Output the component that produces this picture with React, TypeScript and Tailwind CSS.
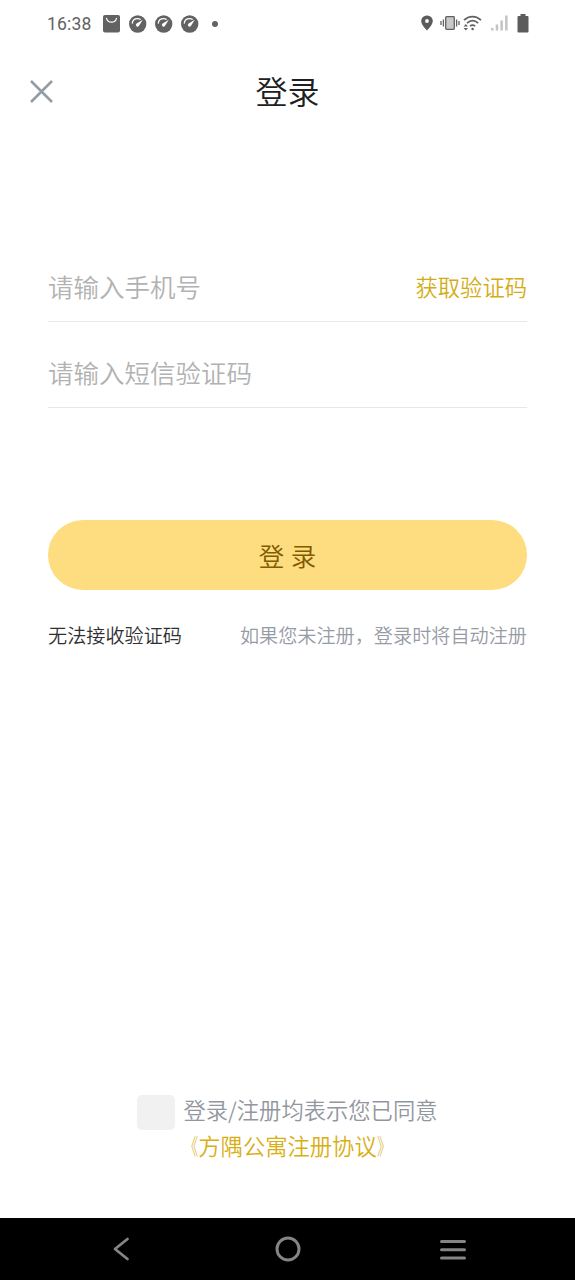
import React, { useState } from 'react';

const BagIcon = () => (
  <svg className="h-[18px] w-[18px]" viewBox="0 0 18 18" fill="none">
    <rect x="0" y="0" width="17" height="17.5" rx="2" fill="#626262" />
    <path d="M3.500 3.300c.6 2.400 2.400 3.900 5 3.900s4.400-1.500 5-3.900" stroke="#fff" strokeWidth="1.2" strokeLinecap="round" />
  </svg>
);

const GaugeIcon = () => (
  <svg className="h-[18px] w-[18px]" viewBox="0 0 18 18" fill="none">
    <circle cx="8.700" cy="9" r="8.700" fill="#626262" />
    <path d="M3.200 8.600C3.500 5.500 5.700 3.700 8.700 3.700c1.200 0 2.100.3 3 .8" stroke="#fff" strokeWidth="1.200" />
    <path d="M13.800 4.700L7.300 8.800a1.700 1.700 0 1 0 2.600 2.200z" fill="#fff" />
  </svg>
);

const PinIcon = () => (
  <svg className="h-4 w-3" viewBox="0 0 12 16">
    <path
      fill="#5c5c5c"
      fillRule="evenodd"
      d="M6 .5A5.500 5.500 0 0 0 .2 6c0 4 5.800 9.500 5.800 9.500S11.800 10 11.800 6A5.500 5.500 0 0 0 6 .5zm0 3.600a1.900 1.900 0 1 1 0 3.800 1.900 1.900 0 0 1 0-3.800z"
    />
  </svg>
);

const VibrateIcon = () => (
  <svg className="h-4 w-5" viewBox="0 0 20 16" fill="none" stroke="#606060" strokeWidth="1.300">
    <rect x="5.700" y="1.700" width="8.600" height="12.600" rx="0.800" fill="#c9c9c9" />
    <path d="M3.400 4.500v7M1 6v4M16.600 4.500v7M19 6v4" />
  </svg>
);

const WifiIcon = () => (
  <svg className="h-4 w-[19px]" viewBox="0 0 19 16" fill="none" stroke="#606060" strokeWidth="1.700">
    <path d="M1 5.200c4.900-4.900 12.100-4.900 17 0" />
    <path d="M4 8.200c3.500-3.100 7.800-3.100 11.200 0" />
    <path d="M7 11.100c1.700-1.400 3.500-1.400 5.200 0" />
    <circle cx="9.600" cy="14" r="1.300" fill="#606060" stroke="none" />
    <path d="M.6 11.600l2.200-2.500L5 11.600zM.6 12.900l2.200 2.500L5 12.900z" fill="#606060" stroke="none" />
  </svg>
);

const SignalIcon = () => (
  <svg className="h-4 w-[17px]" viewBox="0 0 17 16" fill="#c4c4c4">
    <rect x="0" y="13" width="2.500" height="2.500" />
    <rect x="4.700" y="9.500" width="2.500" height="6" />
    <rect x="9.400" y="5.500" width="2.500" height="10" />
    <rect x="14.100" y="0.500" width="2.500" height="15" />
  </svg>
);

const BatteryIcon = () => (
  <svg className="h-5 w-3" viewBox="0 0 12 20" fill="#5c5c5c">
    <path d="M3.500 1h5v2H10.500q1 0 1 1V18.500q0 1-1 1h-9q-1 0-1-1V4q0-1 1-1h2z" />
  </svg>
);

const StatusBar = () => (
  <div className="flex h-[47px] items-center pl-[47px] pr-[46px]">
    <span className="w-[55px] pt-px font-['Roboto',sans-serif] text-[17.500px] font-normal leading-5 tracking-[0.2px] text-[#626262]">16:38</span>
    <div className="flex items-center gap-2 pl-px">
      <BagIcon />
      <GaugeIcon />
      <GaugeIcon />
      <GaugeIcon />
    </div>
    <span className="ml-[13px] size-1.5 rounded-full bg-[#626262]" />
    <div className="ml-auto flex items-center pb-px">
      <PinIcon />
      <span className="ml-[7px]"><VibrateIcon /></span>
      <span className="ml-[3px]"><WifiIcon /></span>
      <span className="ml-[9px]"><SignalIcon /></span>
      <span className="ml-[9px]"><BatteryIcon /></span>
    </div>
  </div>
);

const Header = () => (
  <header className="grid h-[90px] grid-cols-[1fr_auto_1fr] items-center pb-[2px]">
    <button type="button" aria-label="关闭" className="pl-[29px]">
      <svg className="size-[25px]" viewBox="0 0 25 25" fill="none" stroke="#929ca5" strokeWidth="2.500">
        <path d="M2 2l21 21M23 2L2 23" />
      </svg>
    </button>
    <h1 className="pb-[3px] text-[32px] font-[350] leading-10 text-[#202020]">登录</h1>
  </header>
);

const NavBar = () => (
  <nav className="grid h-[62px] grid-cols-[1fr_auto_1fr] items-center bg-black pl-[112px] pr-[109px]">
    <svg className="h-6 w-[18px]" viewBox="0 0 18 24" fill="none" stroke="#858585" strokeWidth="2.800" strokeLinecap="round" strokeLinejoin="round">
      <path d="M15.500 2L3 12l12.500 10" />
    </svg>
    <svg className="-ml-[2px] size-[26px]" viewBox="0 0 26 26" fill="none" stroke="#858585" strokeWidth="3">
      <circle cx="13" cy="13" r="11" />
    </svg>
    <svg className="h-[22px] w-[26px] justify-self-end" viewBox="0 0 26 22" fill="none" stroke="#858585" strokeWidth="3" strokeLinecap="round">
      <path d="M1.500 3.500h23M1.500 11.700h23M1.500 20h23" />
    </svg>
  </nav>
);

const App: React.FC = () => {
  const [phone, setPhone] = useState('');
  const [code, setCode] = useState('');

  return (
    <div className="flex h-[1280px] w-[575px] flex-col overflow-hidden bg-white font-['Noto_Sans_CJK_SC',sans-serif] font-[350]">
      <StatusBar />
      <Header />

      <main className="flex flex-1 flex-col px-12 pt-[115px]">
        <div className="flex h-[70px] items-center justify-between border-b border-[#e8e8e8]">
          <input
            className="h-10 w-[300px] pb-[3px] text-[25.500px] outline-none placeholder:text-[#b2b2b2]"
            placeholder="请输入手机号"
            value={phone}
            onChange={(e) => setPhone(e.target.value)}
          />
          <button type="button" className="text-[22.300px] text-[#d3ad16]">获取验证码</button>
        </div>
        <div className="flex h-[86px] items-center border-b border-[#e8e8e8] pt-4">
          <input
            className="h-10 w-full pb-[2px] text-[25.500px] outline-none placeholder:text-[#b2b2b2]"
            placeholder="请输入短信验证码"
            value={code}
            onChange={(e) => setCode(e.target.value)}
          />
        </div>

        <button type="button" className="mt-28 h-[70px] rounded-full bg-[#fedd81] text-[25.500px] text-[#805b00] [word-spacing:1px]">
          登 录
        </button>

        <div className="mt-[31px] flex items-center justify-between text-[19.150px] leading-7">
          <span className="text-[#303030]">无法接收验证码</span>
          <span className="text-[#969ba6]">如果您未注册，登录时将自动注册</span>
        </div>

        <div className="mb-[55px] mt-auto flex flex-col items-center text-[22.300px] leading-9">
          <label className="flex items-start gap-2 text-[#92979f]">
            <span className="mt-1 h-[35px] w-[38px] rounded-[5px] bg-[#f1f1f1]" />
            登录/注册均表示您已同意
          </label>
          <a className="-mt-[3px] text-[#d9ae12]">
            <span className="inline-block origin-right scale-x-[0.65] font-light">《</span>
            方隅公寓注册协议
            <span className="inline-block origin-left scale-x-[0.65] font-light">》</span>
          </a>
        </div>
      </main>

      <NavBar />
    </div>
  );
};

export default App;
